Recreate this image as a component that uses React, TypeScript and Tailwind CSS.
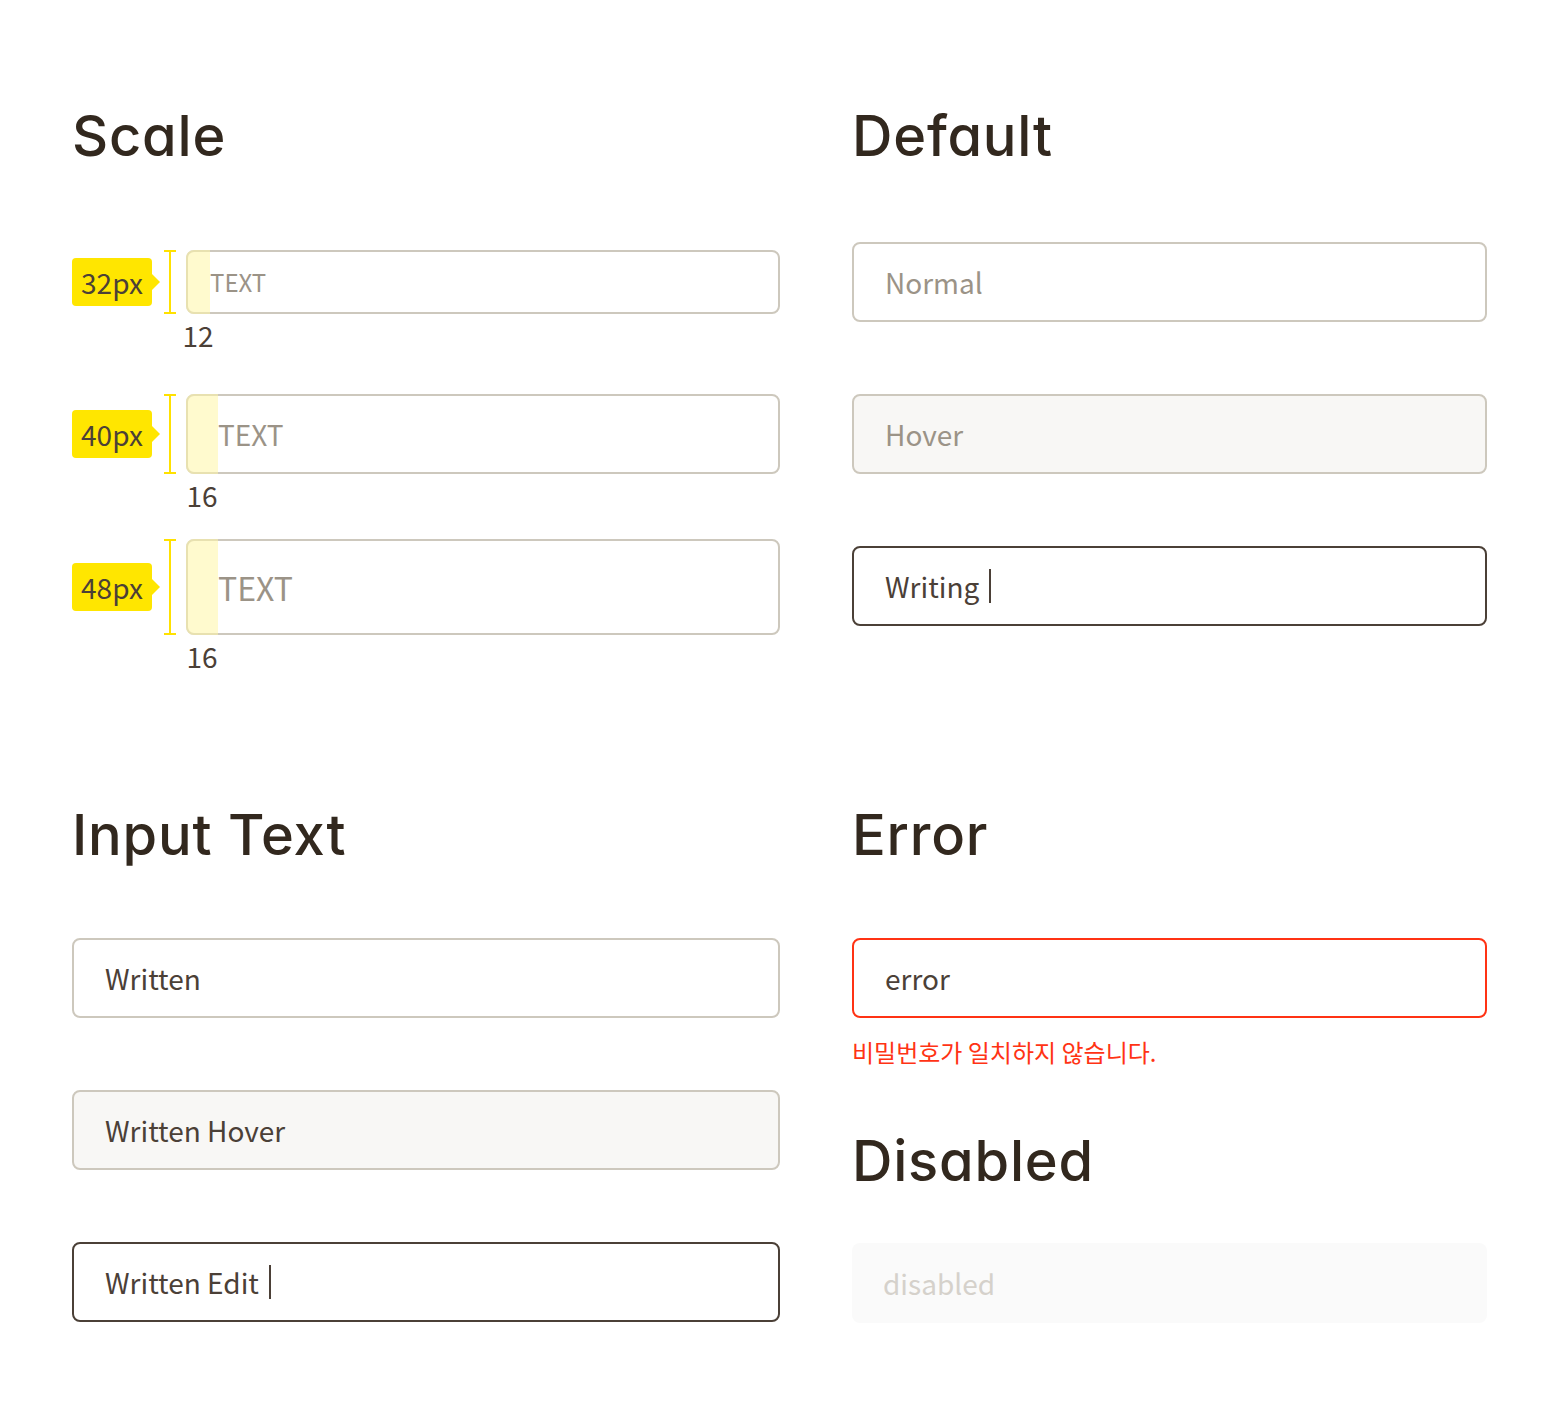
import React from 'react'

const body = "font-['Noto_Sans_CJK_KR','Source_Sans_Pro','Noto_Sans',sans-serif]"
const heading =
  "font-['Inter','Noto_Sans',sans-serif] text-[56px] leading-none font-medium text-[#32281e] tracking-[0.8px] [font-feature-settings:'cv11','ss01']"

type ScaleRowProps = {
  label: string
  height: string
  pad: string
  textSize: string
  textPad: string
  value: string
  className?: string
}

function ScaleRow({ label, height, pad, textSize, textPad, value, className }: ScaleRowProps) {
  return (
    <div className={`flex items-start ${className ?? ''}`}>
      <div className={`flex items-center ${height}`}>
        {/* badge */}
        <div className="flex items-center">
          <div className="flex h-[48px] w-[80px] items-center justify-center rounded-[4px] bg-[#ffe600] text-[28px] leading-none text-[#4b4037]">
            {label}
          </div>
          <div className="h-0 w-0 border-y-[8px] border-l-[8px] border-y-transparent border-l-[#ffe600]" />
        </div>
        {/* bracket */}
        <div className="ml-[4px] flex h-full w-[12px] flex-col items-center">
          <div className="h-[2px] w-[12px] bg-[#ffe100]" />
          <div className="w-[2px] flex-1 bg-[#ffe100]" />
          <div className="h-[2px] w-[12px] bg-[#ffe100]" />
        </div>
      </div>
      <div className="ml-[10px] flex flex-1 flex-col">
        <div
          className={`relative flex items-center rounded-[8px] border-2 border-[#cdc8bd] bg-white ${height} ${textPad}`}
        >
          <div
            className={`absolute -bottom-[2px] -left-[2px] -top-[2px] rounded-l-[8px] bg-[#fff6a6]/55 ${pad}`}
          />
          <span className={`relative leading-none text-[#9b9387] ${textSize}`}>TEXT</span>
        </div>
        <div className={`mt-[7px] flex justify-center text-[28px] leading-none text-[#4b4037] ${pad}`}>
          <span className="whitespace-nowrap">{value}</span>
        </div>
      </div>
    </div>
  )
}

type FieldProps = {
  text: string
  variant: 'normal' | 'hover' | 'writing' | 'written' | 'writtenHover' | 'edit' | 'error' | 'disabled'
  className?: string
}

function Field({ text, variant, className }: FieldProps) {
  const box = {
    normal: 'border-2 border-[#cdc8bd] bg-white text-[#9b9387]',
    hover: 'border-2 border-[#cdc8bd] bg-[#f8f7f5] text-[#9b9387]',
    writing: 'border-2 border-[#4b4037] bg-white text-[#4b4037]',
    written: 'border-2 border-[#cdc8bd] bg-white text-[#4b4037]',
    writtenHover: 'border-2 border-[#cdc8bd] bg-[#f8f7f5] text-[#4b4037]',
    edit: 'border-2 border-[#4b4037] bg-white text-[#4b4037]',
    error: 'border-2 border-[#ff3314] bg-white text-[#4b4037]',
    disabled: 'bg-[#fafafa] text-[#d5d1cb]',
  }[variant]
  const caret = variant === 'writing' || variant === 'edit'
  return (
    <div className={`flex h-[80px] items-center rounded-[8px] px-[31px] ${box} ${className ?? ''}`}>
      <span className="text-[28px] leading-none">{text}</span>
      {caret && <span className="ml-[10px] inline-block h-[34px] w-[2px] bg-[#4b4037]" />}
    </div>
  )
}

export default function App() {
  return (
    <div className={`min-h-[1422px] w-[1560px] bg-white pl-[72px] pr-[73px] pt-[108px] ${body}`}>
      <div className="grid grid-cols-[708px_635px] gap-x-[72px]">
        {/* Scale */}
        <div className="flex flex-col">
          <h2 className={heading}>Scale</h2>
          <ScaleRow
            className="mt-[86px]"
            label="32px"
            height="h-[64px]"
            pad="w-[24px]"
            textSize="text-[24px]"
            textPad="pl-[22px]"
            value="12"
          />
          <ScaleRow
            className="mt-[45px]"
            label="40px"
            height="h-[80px]"
            pad="w-[32px]"
            textSize="text-[28px]"
            textPad="pl-[30px]"
            value="16"
          />
          <ScaleRow
            className="mt-[30px]"
            label="48px"
            height="h-[96px]"
            pad="w-[32px]"
            textSize="text-[32px]"
            textPad="pl-[30px]"
            value="16"
          />
        </div>

        {/* Default */}
        <div className="flex flex-col">
          <h2 className={heading}>Default</h2>
          <Field className="mt-[78px]" text="Normal" variant="normal" />
          <Field className="mt-[72px]" text="Hover" variant="hover" />
          <Field className="mt-[72px]" text="Writing" variant="writing" />
        </div>
      </div>

      <div className="mt-[137px] grid grid-cols-[708px_635px] gap-x-[72px]">
        {/* Input Text */}
        <div className="flex flex-col">
          <h2 className={heading}>Input Text</h2>
          <Field className="mt-[75px]" text="Written" variant="written" />
          <Field className="mt-[72px]" text="Written Hover" variant="writtenHover" />
          <Field className="mt-[72px]" text="Written Edit" variant="edit" />
        </div>

        {/* Error + Disabled */}
        <div className="flex flex-col">
          <h2 className={heading}>Error</h2>
          <Field className="mt-[75px]" text="error" variant="error" />
          <p className="mt-[22px] text-[24px] leading-none text-[#ff3314]">비밀번호가 일치하지 않습니다.</p>
          <h2 className={`mt-[69px] ${heading}`}>Disabled</h2>
          <Field className="mt-[54px]" text="disabled" variant="disabled" />
        </div>
      </div>
    </div>
  )
}
